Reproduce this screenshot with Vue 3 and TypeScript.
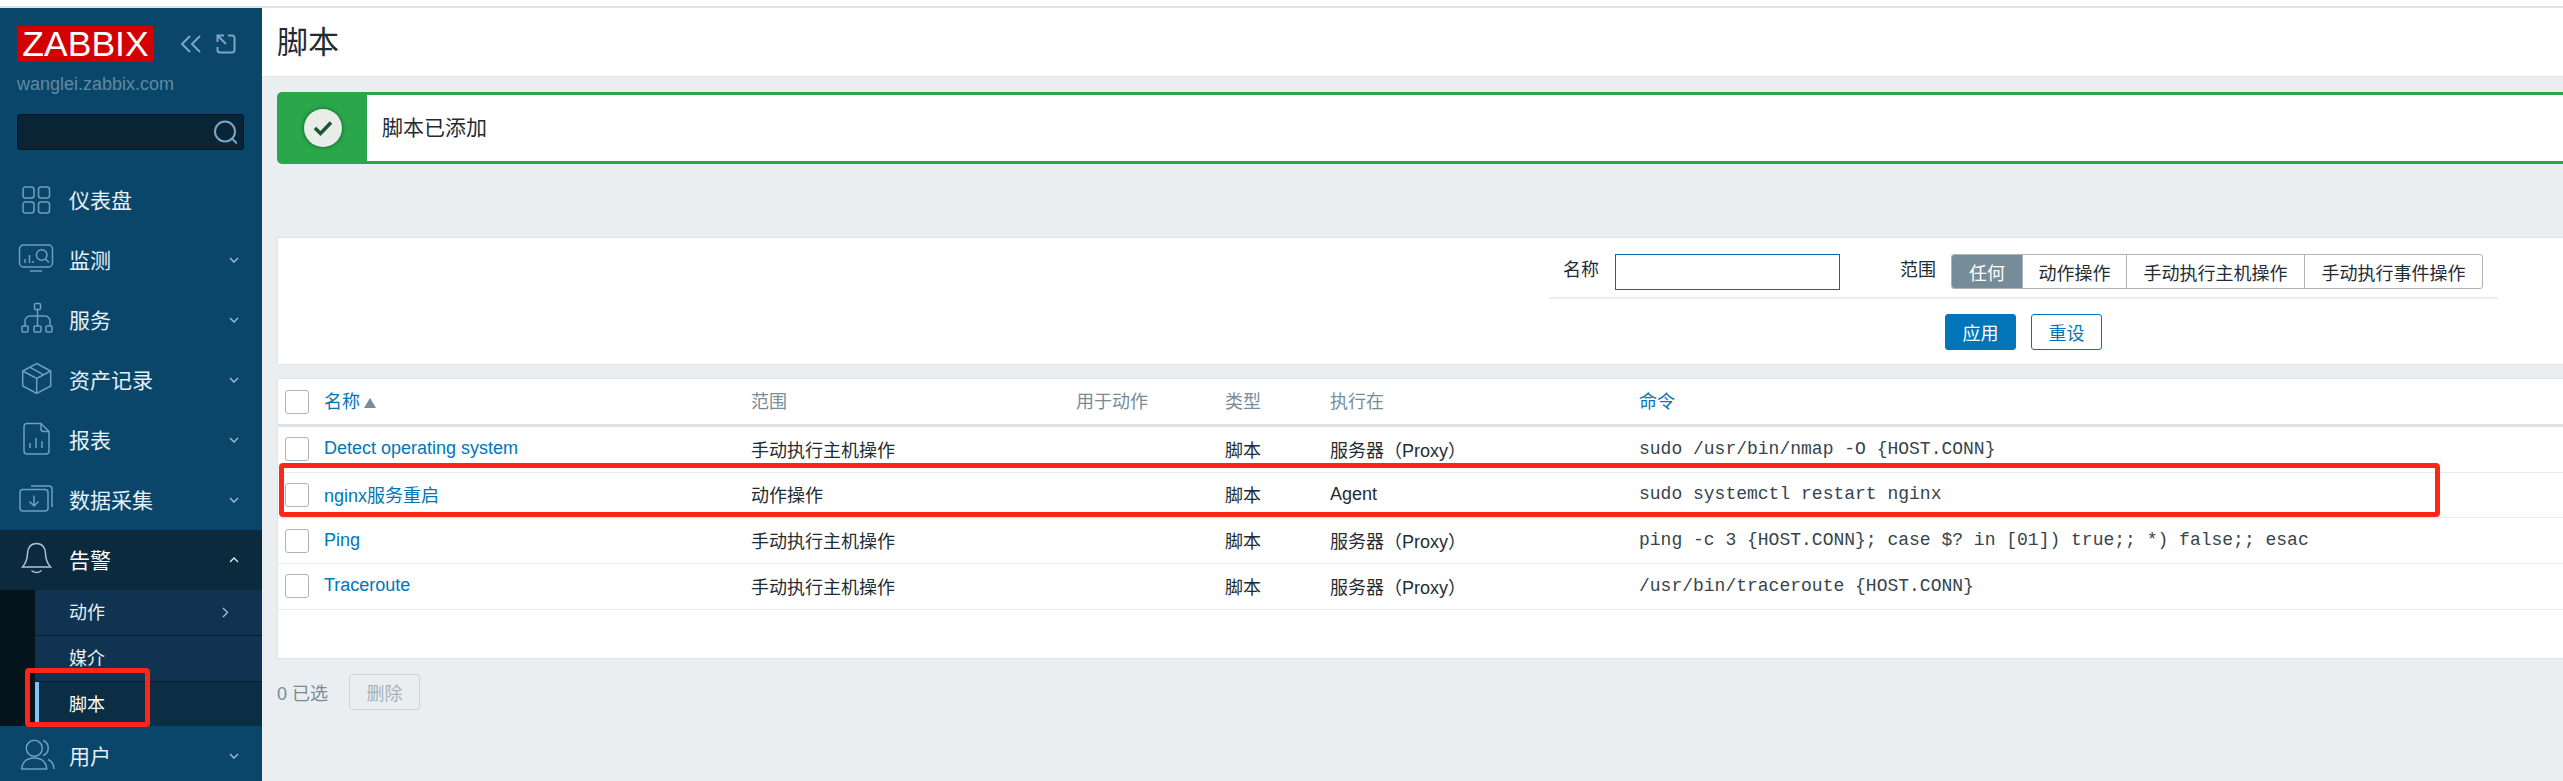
<template>
  <div class="page">
    <aside class="sidebar">
      <div class="brand">
        <span class="logo">ZABBIX</span>
        <div class="brand-tools">
          <svg width="22" height="20" viewBox="0 0 22 20">
            <path d="M10 2 2 10l8 8M20 2l-8 8 8 8" />
          </svg>
          <svg width="20" height="20" viewBox="0 0 20 20">
            <path d="M8 1.500H1.500V8M1.500 1.500 10 10M12 1.500h4a2.500 2.500 0 0 1 2.500 2.500v12a2.500 2.500 0 0 1-2.500 2.500H4A2.500 2.500 0 0 1 1.500 16v-3" />
          </svg>
        </div>
      </div>
      <div class="server">wanglei.zabbix.com</div>
      <div class="search">
        <svg width="24" height="24" viewBox="0 0 24 24">
          <path d="M22 11.500a10 10 0 1 1-20 0 10 10 0 0 1 20 0ZM19 18.500l5 5" />
        </svg>
      </div>
      <nav class="nav">
        <template v-for="item in navItems" :key="item.label">
          <div class="nav-item" :class="{ open: item.open }">
            <svg class="nav-icon" width="40" height="40" viewBox="0 0 40 40">
              <path v-for="d in item.icon" :key="d" :d="d" />
            </svg>
            <span class="nav-label">{{ item.label }}</span>
            <svg v-if="item.arrow" class="chevron" :class="{ up: item.open }" width="10" height="6" viewBox="0 0 10 6">
              <path d="m1 1 4 4 4-4" />
            </svg>
          </div>
          <div v-if="item.open" class="submenu">
            <div
              v-for="sub in subItems"
              :key="sub.label"
              class="sub-item"
              :class="{ active: sub.active }"
            >
              <span class="nav-label">{{ sub.label }}</span>
              <svg v-if="sub.arrow" width="7" height="11" viewBox="0 0 7 11">
                <path d="m1 1 4.500 4.500L1 10" />
              </svg>
            </div>
          </div>
        </template>
      </nav>
    </aside>

    <main class="main">
      <header class="page-title">脚本</header>
      <div class="content">
        <div class="message">
          <div class="message-badge">
            <span class="message-circle">
              <svg width="20" height="16" viewBox="0 0 20 16">
                <path d="m2 8 5.500 5.500L18 2.500" />
              </svg>
            </span>
          </div>
          <div class="message-text">脚本已添加</div>
        </div>

        <section class="filter">
          <div class="filter-row">
            <label class="filter-label">名称</label>
            <input class="filter-input" type="text" />
            <label class="filter-label scope-label">范围</label>
            <div class="segments">
              <span
                v-for="seg in segments"
                :key="seg.label"
                class="segment"
                :class="{ selected: seg.selected }"
                :style="{ width: seg.width + 'px' }"
              >{{ seg.label }}</span>
            </div>
          </div>
          <div class="filter-actions">
            <button class="btn primary">应用</button>
            <button class="btn outline">重设</button>
          </div>
        </section>

        <section class="table">
          <div class="row head">
            <span class="check"></span>
            <span class="link">名称<i class="sort"></i></span>
            <span>范围</span>
            <span>用于动作</span>
            <span>类型</span>
            <span>执行在</span>
            <span class="link">命令</span>
          </div>
          <div v-for="row in rows" :key="row.name" class="row">
            <span class="check"></span>
            <span class="link">{{ row.name }}</span>
            <span>{{ row.scope }}</span>
            <span></span>
            <span>脚本</span>
            <span>{{ row.target }}</span>
            <span class="mono">{{ row.command }}</span>
          </div>
          <div class="table-blank"></div>
        </section>

        <div class="footer">
          <span>0 已选</span>
          <button class="btn-disabled">删除</button>
        </div>
      </div>
    </main>

    <div class="mark mark-menu"></div>
    <div class="mark mark-row"></div>
  </div>
</template>

<script setup lang="ts">
interface NavItem {
  label: string
  icon: string[]
  arrow: boolean
  open?: boolean
}

const navItems: NavItem[] = [
  {
    label: '仪表盘',
    arrow: false,
    icon: [
      'M9.500 7h6a2.500 2.500 0 0 1 2.500 2.500v6a2.500 2.500 0 0 1-2.500 2.500h-6A2.500 2.500 0 0 1 7 15.500v-6A2.500 2.500 0 0 1 9.500 7Z',
      'M25 7h6a2.500 2.500 0 0 1 2.500 2.500v6A2.500 2.500 0 0 1 31 18h-6a2.500 2.500 0 0 1-2.500-2.500v-6A2.500 2.500 0 0 1 25 7Z',
      'M9.500 22h6a2.500 2.500 0 0 1 2.500 2.500v6a2.500 2.500 0 0 1-2.500 2.500h-6A2.500 2.500 0 0 1 7 30.500v-6A2.500 2.500 0 0 1 9.500 22Z',
      'M25 22h6a2.500 2.500 0 0 1 2.500 2.500v6A2.500 2.500 0 0 1 31 33h-6a2.500 2.500 0 0 1-2.500-2.500v-6A2.500 2.500 0 0 1 25 22Z',
    ],
  },
  {
    label: '监测',
    arrow: true,
    icon: [
      'M7.500 5h25a4 4 0 0 1 4 4v14a4 4 0 0 1-4 4h-25a4 4 0 0 1-4-4V9a4 4 0 0 1 4-4Z',
      'M14 31h12',
      'M9 19v4M13.500 15v8M17 21v2',
      'M31 15a5.300 5.300 0 1 1-10.600 0 5.300 5.300 0 0 1 10.600 0ZM29.500 19l3.500 3.500',
    ],
  },
  {
    label: '服务',
    arrow: true,
    icon: [
      'M19.500 3.500h4a1 1 0 0 1 1 1v4a1 1 0 0 1-1 1h-4a1 1 0 0 1-1-1v-4a1 1 0 0 1 1-1Z',
      'M21.500 9.500V26',
      'M9 26v-5a5 5 0 0 1 5-5h15a5 5 0 0 1 5 5v5',
      'M7 26h4a1 1 0 0 1 1 1v4a1 1 0 0 1-1 1H7a1 1 0 0 1-1-1v-4a1 1 0 0 1 1-1Z',
      'M19 26h5a1 1 0 0 1 1 1v4a1 1 0 0 1-1 1h-5a1 1 0 0 1-1-1v-4a1 1 0 0 1 1-1Z',
      'M31 26h4a1 1 0 0 1 1 1v4a1 1 0 0 1-1 1h-4a1 1 0 0 1-1-1v-4a1 1 0 0 1 1-1Z',
    ],
  },
  {
    label: '资产记录',
    arrow: true,
    icon: [
      'M20.700 3.500 34.700 11v15l-14 7.500-14-7.500V11Z',
      'M6.700 11l14 7.500 14-7.500M20.700 18.500v15',
      'M13.700 7.200l14 7.600',
    ],
  },
  {
    label: '报表',
    arrow: true,
    icon: [
      'M11 3.500h14l8 8V31a3 3 0 0 1-3 3H11a3 3 0 0 1-3-3V6.500a3 3 0 0 1 3-3Z',
      'M25 3.500V9a2.500 2.500 0 0 0 2.500 2.500H33',
      'M14 23v5M20 18v10M26 21v7',
    ],
  },
  {
    label: '数据采集',
    arrow: true,
    icon: [
      'M7 9.500h22a3 3 0 0 1 3 3V28a3 3 0 0 1-3 3H7a3 3 0 0 1-3-3V12.500a3 3 0 0 1 3-3Z',
      'M15 6h18a3 3 0 0 1 3 3v18',
      'M18 15.500V26M13.500 21.500 18 26l4.500-4.500',
    ],
  },
  {
    label: '告警',
    arrow: true,
    open: true,
    icon: [
      'M20.500 3.500c-6 0-9 4.500-9 10 0 6-2 10-5 13.500h28c-3-3.500-5-7.500-5-13.500 0-5.500-3-10-9-10Z',
      'M15.500 30.500c3 2.500 7 2.500 10 0',
    ],
  },
  {
    label: '用户',
    arrow: true,
    icon: [
      'M26.300 12.300a8 8 0 1 1-16 0 8 8 0 0 1 16 0Z',
      'M27 4.500a8 8 0 0 1 0 15',
      'M5.700 33c0-6.500 5-11 12.500-11s12.500 4.500 12.500 11Z',
      'M32 23.500c3.500 1.500 6 5 6 9.500',
    ],
  },
]

const subItems = [
  { label: '动作', arrow: true, active: false },
  { label: '媒介', arrow: false, active: false },
  { label: '脚本', arrow: false, active: true },
]

const segments = [
  { label: '任何', width: 70, selected: true },
  { label: '动作操作', width: 104, selected: false },
  { label: '手动执行主机操作', width: 178, selected: false },
  { label: '手动执行事件操作', width: 178, selected: false },
]

const rows = [
  {
    name: 'Detect operating system',
    scope: '手动执行主机操作',
    target: '服务器（Proxy）',
    command: 'sudo /usr/bin/nmap -O {HOST.CONN}',
  },
  {
    name: 'nginx服务重启',
    scope: '动作操作',
    target: 'Agent',
    command: 'sudo systemctl restart nginx',
  },
  {
    name: 'Ping',
    scope: '手动执行主机操作',
    target: '服务器（Proxy）',
    command: 'ping -c 3 {HOST.CONN}; case $? in [01]) true;; *) false;; esac',
  },
  {
    name: 'Traceroute',
    scope: '手动执行主机操作',
    target: '服务器（Proxy）',
    command: '/usr/bin/traceroute {HOST.CONN}',
  },
]
</script>

<style>
html,
body {
  margin: 0;
  background: #fff;
  overflow: hidden;
}
</style>

<style scoped>
.page {
  position: relative;
  display: flex;
  width: 2563px;
  height: 781px;
  padding-top: 6px;
  box-sizing: border-box;
  overflow: hidden;
  font-family: "Liberation Sans", "Noto Sans CJK SC", sans-serif;
  font-size: 18px;
  color: #1f2c33;
  background: #ebeef0;
}

.page::before {
  content: "";
  position: absolute;
  top: 0;
  left: 0;
  right: 0;
  height: 6px;
  background: #fff;
  border-bottom: 2px solid #dfe3e5;
}

/* sidebar */
.sidebar {
  flex: 0 0 262px;
  margin-top: 2px;
  background: #0a466a;
  color: #e6f0f6;
}

.brand {
  display: flex;
  align-items: center;
  padding: 18px 0 0 17px;
}

.logo {
  width: 137px;
  height: 36px;
  background: #d40000;
  color: #fff;
  font-size: 35.500px;
  line-height: 37px;
  text-align: center;
}

.brand-tools {
  display: flex;
  align-items: center;
  gap: 14px;
  margin-left: 26px;
}

.brand-tools path,
.search path {
  fill: none;
  stroke: #78a6c4;
  stroke-width: 2;
}

.server {
  margin: 11px 0 0 17px;
  height: 22px;
  line-height: 22px;
  color: #5f8aa6;
  font-size: 18px;
}

.search {
  display: flex;
  align-items: center;
  justify-content: flex-end;
  width: 227px;
  height: 36px;
  margin: 19px 0 0 17px;
  padding-right: 6px;
  box-sizing: border-box;
  background: #0b2435;
  border: 1px solid #061520;
  border-radius: 3px;
}

.nav {
  margin-top: 20px;
}

.nav-item {
  display: flex;
  align-items: center;
  height: 60px;
  padding-left: 16px;
  font-size: 21px;
}

.nav-label {
  padding-bottom: 3px;
}

.nav-item.open {
  background: #0b2a3e;
  color: #fff;
}

.nav-icon {
  flex: none;
  margin-right: 13px;
}

.nav-icon path {
  fill: none;
  stroke: #6c9fc0;
  stroke-width: 1.500;
}

.nav-item.open .nav-icon path {
  stroke: #a9c4d6;
}

.chevron {
  margin-left: auto;
  margin-right: 23px;
}

.chevron path,
.sub-item path {
  fill: none;
  stroke: #a6c4d8;
  stroke-width: 1.300;
}

.chevron.up {
  transform: rotate(180deg);
}

.chevron.up path {
  stroke: #e6f0f6;
}

.submenu {
  padding-left: 35px;
  background: #04131c;
}

.sub-item {
  display: flex;
  align-items: center;
  justify-content: space-between;
  height: 46px;
  padding: 0 33px 0 34px;
  box-sizing: border-box;
  background: #0f3350;
  border-bottom: 1px solid #071f30;
  font-size: 18px;
}

.sub-item.active {
  height: 44px;
  padding-left: 30px;
  background: #0b2e44;
  border-bottom: 0;
  border-left: 4px solid #7ec3f5;
  color: #fff;
}

/* main */
.main {
  flex: 1;
  min-width: 0;
  overflow: hidden;
}

.page-title {
  height: 69px;
  margin-top: 2px;
  padding-left: 15px;
  box-sizing: border-box;
  background: #fff;
  border-bottom: 1px solid #dfe4e7;
  font-size: 31px;
  line-height: 70px;
}

.content {
  width: 3492px;
  margin-left: 15px;
  padding-top: 15px;
}

.message {
  display: flex;
  height: 72px;
  box-sizing: border-box;
  background: #2aa74a;
  padding: 3px 0 3px 90px;
  border-radius: 5px 0 0 5px;
  position: relative;
}

.message-badge {
  position: absolute;
  left: 27px;
  top: 17px;
}

.message-circle {
  display: flex;
  align-items: center;
  justify-content: center;
  width: 38px;
  height: 38px;
  border-radius: 50%;
  background: #e8edea;
  box-shadow: 0 0 4px rgba(0, 40, 20, 0.6);
}

.message-circle path {
  fill: none;
  stroke: #1c5532;
  stroke-width: 3.500;
}

.message-text {
  flex: 1;
  padding-left: 15px;
  background: #fff;
  font-size: 21px;
  line-height: 66px;
}

.filter {
  height: 128px;
  margin-top: 73px;
  padding-top: 16px;
  box-sizing: border-box;
  background: #fff;
  border: 1px solid #dfe4e7;
  border-right: 0;
}

.filter-row {
  display: flex;
  align-items: flex-start;
  width: 949px;
  height: 45px;
  margin: 0 auto;
  padding-left: 14px;
  box-sizing: border-box;
  border-bottom: 2px solid #ebeef0;
}

.filter-label {
  width: 38px;
  margin-right: 14px;
  line-height: 33px;
}

.scope-label {
  margin-left: 60px;
  margin-right: 13px;
}

.filter-input {
  width: 225px;
  height: 36px;
  padding: 0;
  box-sizing: border-box;
  border: 1px solid #0a6aa6;
  outline: none;
  background: #fff;
}

.segments {
  display: flex;
  height: 35px;
  box-sizing: border-box;
  border: 1px solid #a8b5bd;
  border-radius: 3px;
  overflow: hidden;
}

.segment {
  display: flex;
  align-items: center;
  justify-content: center;
  box-sizing: border-box;
  border-left: 1px solid #a8b5bd;
}

.segment:first-child {
  border-left: 0;
}

.segment.selected {
  background: #768d99;
  color: #fff;
}

.filter-actions {
  display: flex;
  justify-content: center;
  gap: 15px;
  margin-top: 15px;
}

.btn {
  width: 71px;
  height: 36px;
  padding: 0;
  border-radius: 3px;
  font: inherit;
}

.primary {
  background: #0275b8;
  border: 1px solid #0275b8;
  color: #fff;
}

.outline {
  background: #fff;
  border: 1px solid #0275b8;
  color: #0275b8;
}

.table {
  margin-top: 13px;
  background: #fff;
  border: 1px solid #dfe4e7;
  border-right: 0;
}

.row {
  display: grid;
  grid-template-columns: 46px 427px 325px 149px 105px 309px 1fr;
  align-items: center;
  height: 45.670px;
  border-bottom: 1px solid #e9ecee;
  box-sizing: border-box;
}

.row > span:not(.check) {
  padding-bottom: 1px;
}

.row.head {
  height: 48px;
  border-bottom: 3px solid #dde2e5;
  color: #768d99;
}

.row.head > span:not(.check) {
  padding-bottom: 3px;
}

.check {
  width: 24px;
  height: 24px;
  margin-left: 7px;
  box-sizing: border-box;
  background: #fff;
  border: 1px solid #a8b5bd;
  border-radius: 3px;
}

.row .link {
  color: #0275b8;
}

.sort {
  display: inline-block;
  margin-left: 4px;
  border: 6px solid transparent;
  border-top: 0;
  border-bottom: 10px solid #768d99;
}

.mono {
  font-family: "Liberation Mono", "Noto Sans CJK SC", monospace;
  white-space: pre;
  color: #36444c;
}

.table-blank {
  height: 48px;
}

.footer {
  display: flex;
  align-items: center;
  gap: 21px;
  margin-top: 15.500px;
  color: #768d99;
}

.btn-disabled {
  width: 71px;
  height: 36px;
  padding: 0;
  background: #ebeef0;
  border: 1px solid #cfd6da;
  border-radius: 3px;
  color: #a5b3bb;
  font: inherit;
}

/* red annotation boxes drawn over the screenshot */
.mark {
  position: absolute;
  box-sizing: border-box;
  border: 5px solid #ff2517;
  border-radius: 4px;
}

.mark-menu {
  left: 25px;
  top: 668px;
  width: 125px;
  height: 59px;
}

.mark-row {
  left: 279px;
  top: 463px;
  width: 2161px;
  height: 54px;
}
</style>
